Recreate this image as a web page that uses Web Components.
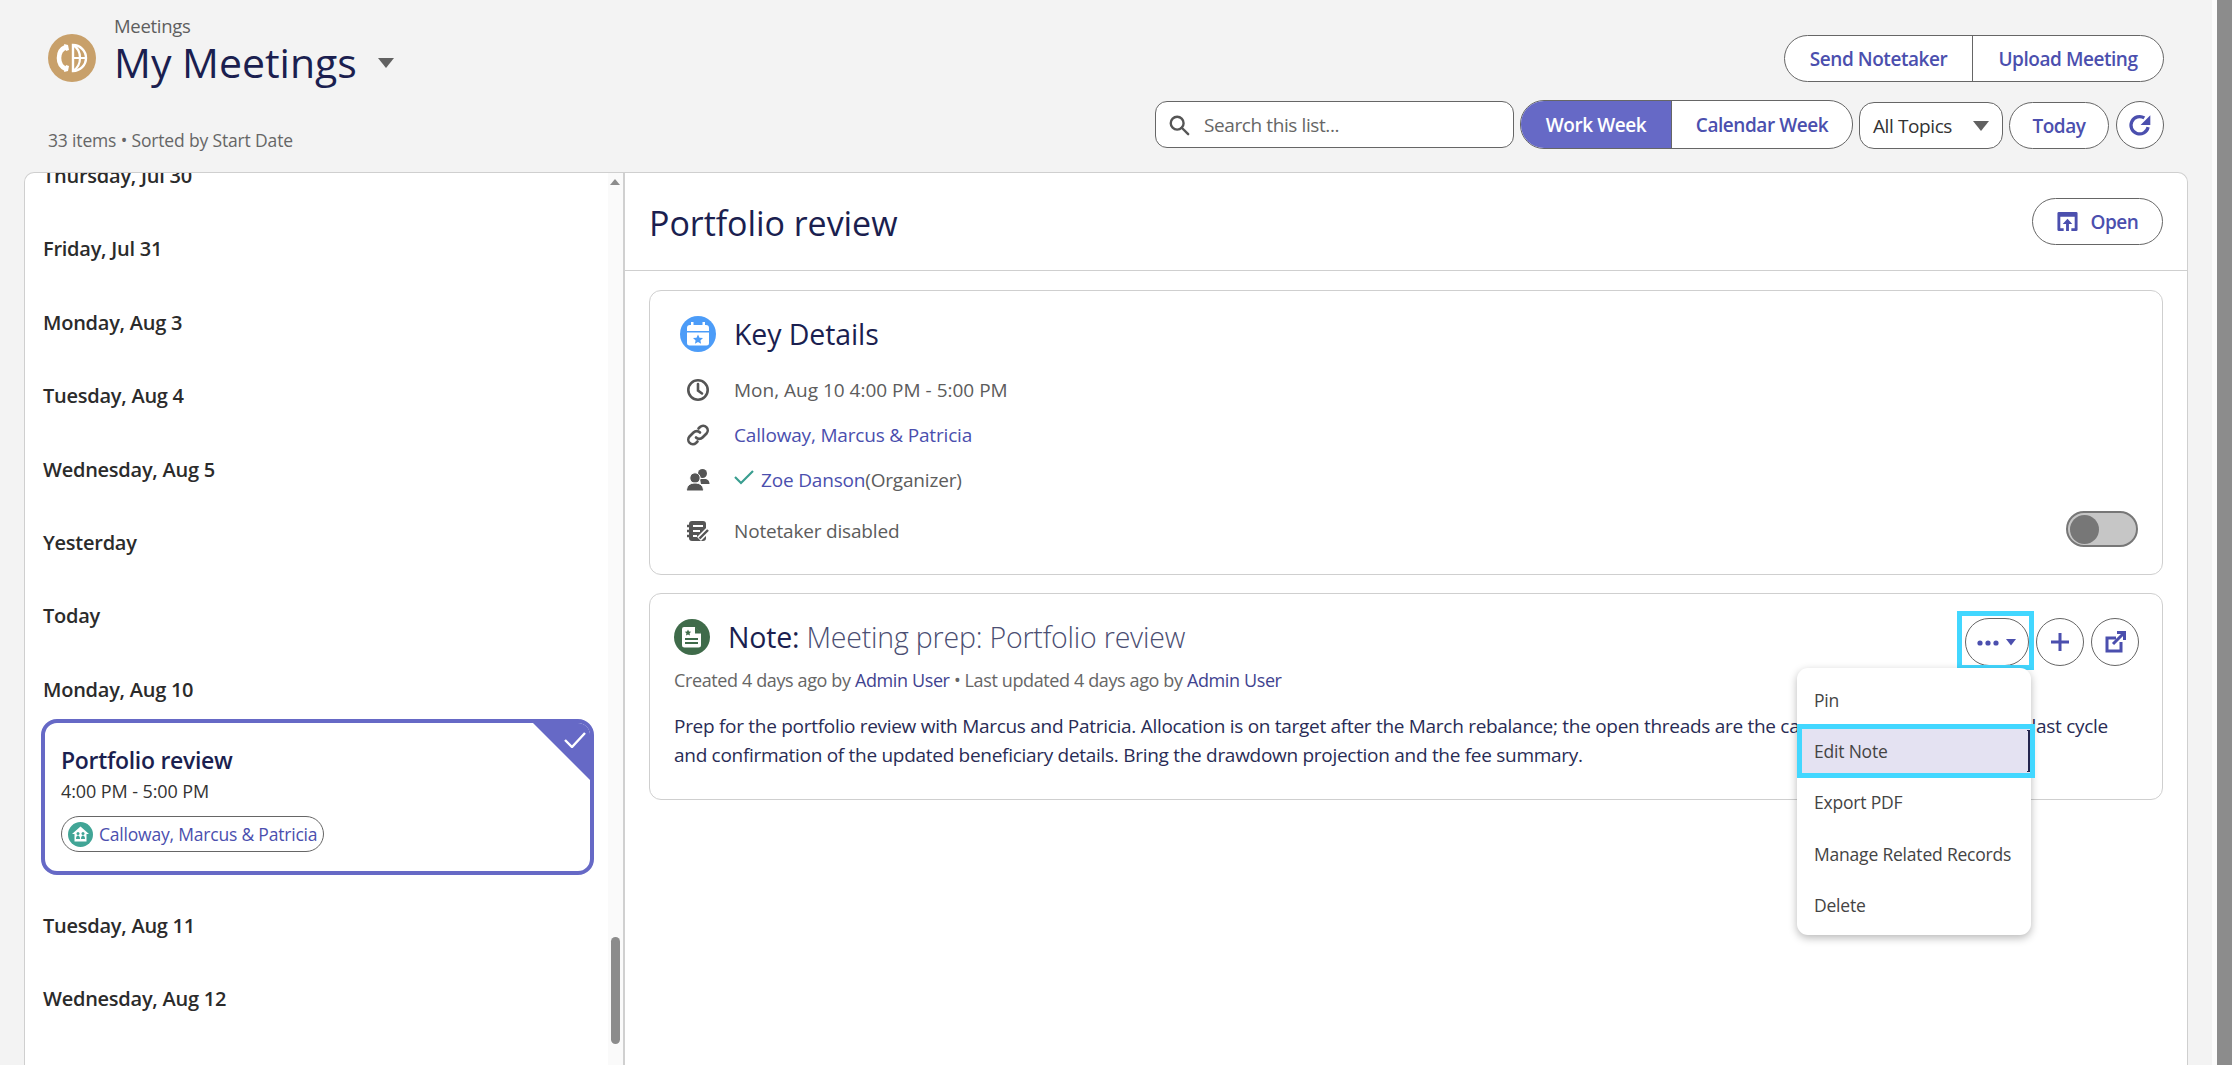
<!DOCTYPE html>
<html><head><meta charset="utf-8">
<style>
html,body{margin:0;height:100%;overflow:hidden}
body{background:#f3f3f3;font-family:"Open Sans","Noto Sans",sans-serif;color:#1b1f50}
</style></head><body>
<app-page></app-page>
<template id="t-page">
<style>
:host{display:flex;flex-direction:column;height:1065px;width:2232px;position:relative;overflow:hidden}
.wrap{flex:1;display:flex;flex-direction:column;padding:0 24px 0 24px;min-height:0;box-sizing:border-box;width:2212px}
.panel{flex:1;display:flex;min-height:0;background:#fff;border:1px solid #cfcfcf;border-bottom:0;border-radius:10px 10px 0 0;overflow:hidden}
.pagebar{position:absolute;right:0;top:0;bottom:0;width:15px;background:#8c8c8c;border-left:5px solid #fbfbfb}
</style>
<div class="wrap"><list-header></list-header>
<div class="panel"><day-list></day-list><meeting-detail></meeting-detail></div></div>
<div class="pagebar"></div>
</template>

<template id="t-header">
<style>
:host{display:flex;justify-content:space-between;height:172px;box-sizing:border-box;padding-right:24px}
.left{display:flex;flex-direction:column;padding-left:24px}
.title{display:flex;align-items:center;gap:18px;margin-top:34px;height:48px}
.logo{width:48px;height:48px;flex:none}
.t{position:relative;display:flex;align-items:center;gap:21px;margin-top:7px}
.crumb{position:absolute;left:0;top:-22px;font-size:18.5px;line-height:24px;color:#5e5e5e;letter-spacing:-.3px}
h1{margin:0;font-weight:400;font-size:41px;line-height:52px;color:#1b1f50;letter-spacing:0}
.caret{width:0;height:0;border:8px solid transparent;border-top:10px solid #616161;border-bottom:0;margin-top:2px}
.sub{margin-top:46px;font-size:17.5px;line-height:24px;color:#666;letter-spacing:-.16px}
.right{display:flex;flex-direction:column;align-items:flex-end;padding-top:35px;gap:18px}
.row{display:flex;align-items:flex-end;gap:6px}
.search{width:359px;height:47px;box-sizing:border-box;border:1px solid #666;border-radius:12px;background:#fff;display:flex;align-items:center;gap:14px;padding-left:12px;font-size:19px;color:#666;letter-spacing:-.4px}
.search svg{width:22px;height:22px}
.sel{width:144px;height:47px;box-sizing:border-box;border:1px solid #666;border-radius:15px;background:#fff;display:flex;align-items:center;justify-content:space-between;padding:0 13px;font-size:19px;color:#333;letter-spacing:-.4px}
.sel i{width:0;height:0;border:8px solid transparent;border-top:10px solid #616161;border-bottom:0}
</style>
<div class="left">
<div class="title">
<svg class="logo" viewBox="0 0 48 48"><circle cx="24" cy="24" r="24" fill="#c8a06a"/><path d="M18 13c-5 2-7 6-7 11s2 9 7 11" fill="none" stroke="#fff" stroke-width="4.600"/><path d="M16 10l4 1 1 5-3 1zM16 38l4-1 1-5-3-1z" fill="#fff"/><path d="M25 11a13 13 0 0 1 0 26z" fill="none" stroke="#fff" stroke-width="2.400"/><path d="M25 11c5 3 7 8 7 13s-2 10-7 13M25 24h13" fill="none" stroke="#fff" stroke-width="2.200"/></svg>
<div class="t"><span class="crumb">Meetings</span><h1>My Meetings</h1><span class="caret"></span></div>
</div>
<div class="sub">33 items • Sorted by Start Date</div>
</div>
<div class="right">
<div class="row"><seg-group><seg-btn style="width:187px">Send Notetaker</seg-btn><seg-btn style="width:191px" divider>Upload Meeting</seg-btn></seg-group></div>
<div class="row">
<div class="search" style="margin-bottom:1px"><svg viewBox="0 0 24 24" fill="none" stroke="#555" stroke-width="2.600"><circle cx="10" cy="10" r="7"/><path d="M15 15l7 7" stroke-linecap="round"/></svg>Search this list...</div>
<seg-group style="--h:49px"><seg-btn style="width:150px" active>Work Week</seg-btn><seg-btn style="width:181px" divider>Calendar Week</seg-btn></seg-group>
<div class="sel">All Topics<i></i></div>
<pill-btn style="width:100px">Today</pill-btn>
<pill-btn style="width:48px;height:48px;margin-left:1px"><svg width="26" height="26" viewBox="0 0 24 24" fill="none" stroke="#4b4fae" stroke-width="3"><path d="M19.500 14a8 8 0 1 1-3.500-8.500"/><path d="M21.500 3v9h-9z" fill="#4b4fae" stroke="none"/></svg></pill-btn>
</div>
</div>
</template>

<template id="t-seg">
<style>
:host{display:flex;height:var(--h,47px);border:1px solid #666;border-radius:24px;overflow:hidden;background:#fff;box-sizing:border-box}
</style><slot></slot>
</template>

<template id="t-segbtn">
<style>
:host{display:flex;align-items:center;justify-content:center;box-sizing:border-box;font-size:19px;font-weight:600;color:#4b4fae;letter-spacing:-.45px;white-space:nowrap}
:host([divider]){border-left:1px solid #666}
:host([active]){background:#6669c6;color:#fff}
</style><slot></slot>
</template>

<template id="t-pill">
<style>
:host{display:flex;align-items:center;justify-content:center;gap:11px;height:47px;box-sizing:border-box;border:1px solid #666;border-radius:24px;background:#fff;font-size:19px;font-weight:600;color:#4b4fae;letter-spacing:-.45px}
</style><slot></slot>
</template>

<template id="t-list">
<style>
:host{display:block;width:600px;flex:none;position:relative;overflow:hidden;border-right:2px solid #d0d0d0;box-sizing:border-box}
.scroll{margin-top:-22px}
.thumb{position:absolute;right:3px;top:764px;width:9px;height:107px;border-radius:4.5px;background:#8c8c8c}
.gut{position:absolute;right:0;top:0;bottom:0;width:15px;background:#fafafa}
.up{position:absolute;right:3px;top:6px;width:0;height:0;border:5px solid transparent;border-bottom:6px solid #8c8c8c;border-top:0}
</style>
<div class="scroll">
<day-head>Thursday, Jul 30</day-head><day-head>Friday, Jul 31</day-head><day-head>Monday, Aug 3</day-head><day-head>Tuesday, Aug 4</day-head><day-head>Wednesday, Aug 5</day-head><day-head>Yesterday</day-head><day-head>Today</day-head>
<day-head>Monday, Aug 10</day-head>
<meet-card></meet-card>
<day-head>Tuesday, Aug 11</day-head><day-head>Wednesday, Aug 12</day-head><day-head>Thursday, Aug 13</day-head>
</div>
<div class="gut"></div><div class="up"></div><div class="thumb"></div>
</template>

<template id="t-dayhead">
<style>
:host{display:block;height:73.4px;padding-left:18px;box-sizing:border-box;font-size:20px;line-height:49px;font-weight:600;color:#2b2b2b;letter-spacing:-.25px}
</style><slot></slot>
</template>

<template id="t-card">
<style>
:host{display:block;margin:-19px 0 25.7px 16px;width:553px;height:156px;box-sizing:border-box;border:4px solid #6669c6;border-radius:16px;position:relative;overflow:hidden;padding:21px 16px 0}
.tri{position:absolute;right:0;top:0;width:0;height:0;border-style:solid;border-width:0 57px 57px 0;border-color:transparent #6669c6 transparent transparent}
svg.c{position:absolute;right:4px;top:9px}
h3{margin:0;font-size:23px;line-height:32px;font-weight:600;color:#1b1f50;letter-spacing:-.3px}
.time{font-size:18px;line-height:26px;color:#333;letter-spacing:-.1px;margin-top:2px}
.chip{display:inline-flex;align-items:center;gap:6px;height:36px;box-sizing:border-box;margin-top:12px;padding:0 6px;border:1px solid #666;border-radius:18px;font-size:17.5px;color:#4b4fae;letter-spacing:-.2px}
</style>
<div class="tri"></div>
<svg class="c" width="22" height="16" viewBox="0 0 22 16" fill="none" stroke="#fff" stroke-width="2.400"><path d="M1 8l7 7L21 1"/></svg>
<h3>Portfolio review</h3>
<div class="time">4:00 PM - 5:00 PM</div>
<div class="chip"><svg width="25" height="25" viewBox="0 0 25 25"><circle cx="12.500" cy="12.500" r="12.500" fill="#41a596"/><path d="M12.500 4.500L21 12h-2.500v7.500h-12V12H4z" fill="#fff"/><circle cx="10" cy="11.500" r="1.500" fill="#41a596"/><circle cx="15" cy="11.500" r="1.500" fill="#41a596"/><path d="M8 17c0-2 .8-3.500 2-3.500s2 1.500 2 3.500zM13 17c0-2 .8-3.500 2-3.500s2 1.500 2 3.500z" fill="#41a596"/></svg>Calloway, Marcus &amp; Patricia</div>
</template>

<template id="t-detail">
<style>
:host{display:block;flex:1;min-width:0}
.head{height:98px;box-sizing:border-box;border-bottom:1px solid #cfcfcf;display:flex;align-items:center;justify-content:space-between;padding:2px 24px 0 24px}
h2{margin:0;font-size:34px;font-weight:400;color:#1b1f50;letter-spacing:-.05px}
.body{padding:19px 24px 0 24px;display:flex;flex-direction:column;gap:18px}
</style>
<div class="head"><h2>Portfolio review</h2>
<pill-btn style="width:131px;height:47px;margin-top:-2px"><svg width="23" height="23" viewBox="0 0 24 24"><path d="M3 2h18a1.500 1.500 0 0 1 1.500 1.500v17a1.500 1.500 0 0 1-1.500 1.500h-5v-3h3.500V7h-15v12H8v3H3a1.500 1.500 0 0 1-1.500-1.500v-17A1.500 1.500 0 0 1 3 2z" fill="#4b4fae"/><path d="M12 9l5 5.500h-3.500V22h-3v-7.500H7z" fill="#4b4fae"/></svg>Open</pill-btn></div>
<div class="body"><key-details></key-details><note-card></note-card></div>
</template>

<template id="t-key">
<style>
:host{display:block;height:285px;box-sizing:border-box;border:1px solid #cfcfcf;border-radius:12px;padding:24px 24px 0 30px;position:relative}
.h{display:flex;align-items:center;gap:18px;height:38px}
.h span{font-size:28.5px;color:#1b1f50;letter-spacing:-.1px}
.r{display:flex;align-items:center;height:45px;font-size:19px;color:#5c5c5c;letter-spacing:-.18px}
.ic{width:36px;display:flex;justify-content:center;margin-right:18px;flex:none}
a{color:#4b4fae;text-decoration:none}
.list{margin-top:14px}
.last{height:58px;justify-content:space-between}
.l{display:flex;align-items:center}
.tg{width:72px;height:36px;box-sizing:border-box;border:2px solid #777;border-radius:18px;background:#c6c6c6;display:flex;align-items:center;padding-left:2px;margin:-4px 0 0 0}
.tg i{width:29px;height:29px;border-radius:50%;background:#777}
</style>
<div class="h"><svg width="36" height="36" viewBox="0 0 36 36"><circle cx="18" cy="18" r="18" fill="#4c9cf8"/><path d="M7 12a3 3 0 0 1 3-3h16a3 3 0 0 1 3 3v3H7z" fill="#fff"/><path d="M7 16.500h22V27a2.500 2.500 0 0 1-2.500 2.500h-17A2.500 2.500 0 0 1 7 27z" fill="#fff"/><path d="M11 6h2.500v4H11zM22.500 6H25v4h-2.500z" fill="#fff"/><path d="M18 18.500l1.500 3.200 3.500.400-2.600 2.300.7 3.400-3.100-1.700-3.100 1.700.7-3.400-2.600-2.300 3.500-.400z" fill="#4c9cf8"/></svg><span>Key Details</span></div>
<div class="list">
<div class="r" style="letter-spacing:0"><div class="ic"><svg width="24" height="24" viewBox="0 0 24 24" fill="none" stroke="#555" stroke-width="2.600"><circle cx="12" cy="12" r="9.700"/><path d="M12 6v6.500l4 3" stroke-linecap="round"/></svg></div>Mon, Aug 10 4:00 PM - 5:00 PM</div>
<div class="r"><div class="ic"><svg width="24" height="24" viewBox="0 0 24 24" fill="none" stroke="#555" stroke-width="2.600" stroke-linecap="round"><path d="M10 14.500a4.500 4.500 0 0 0 6.500 0l4-4a4.600 4.600 0 0 0-6.500-6.500l-1.500 1.500"/><path d="M14 9.500a4.500 4.500 0 0 0-6.500 0l-4 4a4.600 4.600 0 0 0 6.500 6.500l1.500-1.500"/></svg></div><a>Calloway, Marcus &amp; Patricia</a></div>
<div class="r"><div class="ic"><svg width="24" height="24" viewBox="0 0 24 24" fill="#555"><circle cx="16.500" cy="5.500" r="4.500"/><path d="M14 11h5c3 0 4.500 2.500 4.500 5H15z"/><circle cx="9" cy="10" r="5.200" stroke="#fff" stroke-width="1"/><path d="M.5 23c0-5 3-8 8.500-8s8.500 3 8.500 8z" stroke="#fff" stroke-width="1"/></svg></div><svg width="20" height="16" viewBox="0 0 20 16" fill="none" stroke="#3a9e90" stroke-width="2.200" style="margin-right:7px;margin-top:-6px"><path d="M1 8l6 6L19 2"/></svg><a>Zoe Danson</a>(Organizer)</div>
<div class="r last"><div class="l"><div class="ic"><svg width="24" height="24" viewBox="0 0 24 24"><rect x="3" y="2" width="17" height="20" rx="3" fill="#555"/><path d="M7 7h10M7 12h7M7 17h4" stroke="#fff" stroke-width="2"/><path d="M1 7h4M1 12h4M1 17h4" stroke="#555" stroke-width="2.400"/><path d="M13 20l9-9" stroke="#fff" stroke-width="5.500"/><path d="M13.500 19.500l8.500-8.500" stroke="#555" stroke-width="2.400"/></svg></div>Notetaker disabled</div><div class="tg"><i></i></div></div>
</div>
</template>

<template id="t-note">
<style>
:host{display:block;height:207px;box-sizing:border-box;border:1px solid #cfcfcf;border-radius:12px;padding:25px 22px 0 24px;position:relative}
.h{display:flex;align-items:center;gap:18px;height:36px}
.h div{font-size:28.5px;color:#4b4e72;font-weight:300;letter-spacing:-.2px}
.h b{font-weight:400;color:#1b1f50}
.meta{margin-top:12px;font-size:18px;line-height:26px;color:#666;letter-spacing:-.38px}
.meta a{color:#3f4390}
p{margin:19px 0 0;font-size:19px;line-height:29px;color:#292c55;letter-spacing:-.29px;width:1450px}
.acts{position:absolute;top:24px;left:1315px;display:flex;gap:7px}
.acts pill-btn{height:48px}
.ring{position:absolute;inset:-8px -6px -5px -9px;border:5px solid #42d7ff;pointer-events:none}
.more{position:relative}
</style>
<div class="h"><svg width="36" height="36" viewBox="0 0 36 36"><circle cx="18" cy="18" r="18" fill="#3f6b4a"/><path d="M10 8h11l6 6v12a2.500 2.500 0 0 1-2.500 2.500h-14A2.500 2.500 0 0 1 8 26V10a2 2 0 0 1 2-2z" fill="#fff"/><path d="M21 7.500v7h7z" fill="#3f6b4a"/><path d="M11 19h13v2H11zM11 23h13v2H11z" fill="#3f6b4a"/><path d="M14 10.500l1 2 2.200.3-1.600 1.500.4 2.200-2-1-2 1 .4-2.200-1.600-1.500 2.200-.3z" fill="#3f6b4a"/></svg><div><b>Note:</b> Meeting prep: Portfolio review</div></div>
<div class="meta">Created 4 days ago by <a>Admin User</a> • Last updated 4 days ago by <a>Admin User</a></div>
<p>Prep for the portfolio review with Marcus and Patricia. Allocation is on target after the March rebalance; the open threads are the capital call notices from their last cycle and confirmation of the updated beneficiary details. Bring the drawdown projection and the fee summary.</p>
<div class="acts">
<pill-btn class="more" style="width:64px"><svg width="44" height="12" viewBox="0 0 44 12" fill="#4b4fae"><circle cx="5" cy="7" r="2.600"/><circle cx="13" cy="7" r="2.600"/><circle cx="21" cy="7" r="2.600"/><path d="M31 3h10l-5 6.500z"/></svg><span class="ring"></span></pill-btn>
<pill-btn style="width:48px"><svg width="24" height="24" viewBox="0 0 24 24" stroke="#4b4fae" stroke-width="3" fill="none"><path d="M12 3v18M3 12h18"/></svg></pill-btn>
<pill-btn style="width:48px"><svg width="24" height="24" viewBox="0 0 24 24" stroke="#4b4fae" stroke-width="3" fill="none"><path d="M18 12v9H4V8h9"/><path d="M10 14L21 3"/><path d="M14 2.500h7.500V10"/></svg></pill-btn>
</div>
<action-menu></action-menu>
</template>

<template id="t-menu">
<style>
:host{display:block;position:absolute;left:1147px;top:74px;width:234px;height:267px;background:#fff;border-radius:11px;box-shadow:0 3px 8px rgba(0,0,0,.28);padding:6px 0;box-sizing:border-box;z-index:5}
.i{height:51.3px;display:flex;align-items:center;padding-left:17px;font-size:17.5px;color:#444;letter-spacing:-.2px;box-sizing:border-box;position:relative}
.sel{background:#e4e2f2}
.sel::before{content:"";position:absolute;inset:-1px -4px -1px 0;border:5px solid #42d7ff}
.sel::after{content:"";position:absolute;right:1px;top:5px;bottom:5px;width:3px;border:solid #24264f;border-width:1px 2px 1px 0;box-sizing:border-box}
</style>
<div class="i">Pin</div><div class="i sel">Edit Note</div><div class="i">Export PDF</div><div class="i">Manage Related Records</div><div class="i">Delete</div>
</template>

<script>
const map={'app-page':'t-page','list-header':'t-header','seg-group':'t-seg','seg-btn':'t-segbtn','pill-btn':'t-pill','day-list':'t-list','day-head':'t-dayhead','meet-card':'t-card','meeting-detail':'t-detail','key-details':'t-key','note-card':'t-note','action-menu':'t-menu'};
for(const [n,id] of Object.entries(map)){
customElements.define(n,class extends HTMLElement{constructor(){super();this.attachShadow({mode:'open'}).appendChild(document.getElementById(id).content.cloneNode(true));}});
}
</script>
</body></html>
